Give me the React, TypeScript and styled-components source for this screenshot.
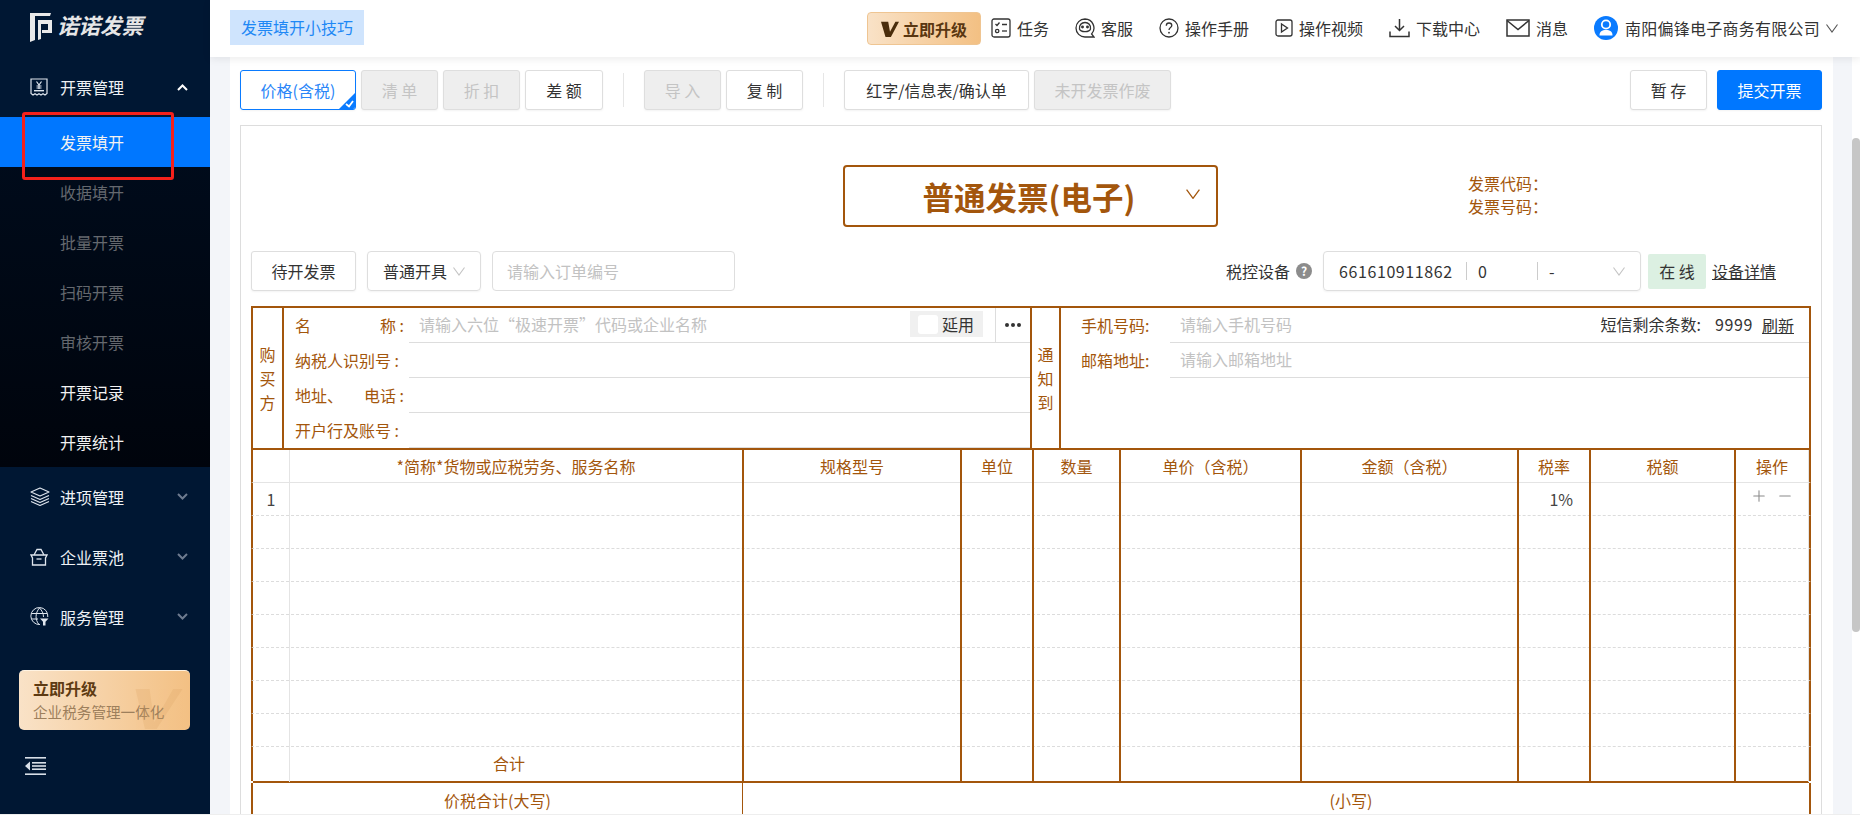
import { FC, ReactNode } from "react";
import styled, { createGlobalStyle } from "styled-components";
import { Plus, Minus } from "lucide-react";

const BROWN = "#a3560c";
const FIELD_LINE = "#dddddd";

const GlobalStyle = createGlobalStyle`
  html, body {
    margin: 0;
    height: 820px;
    overflow: hidden;
    background: #fff;
    font-family: "Noto Sans CJK SC", "Noto Sans", sans-serif;
    font-size: 16px;
    color: #333;
  }
  * { box-sizing: border-box; }
`;

const Shell = styled.div`
  display: flex;
  height: 815px;
  overflow: hidden;
  border-bottom: 1px solid #eeeeee;
`;

/* ---------- sidebar ---------- */

const Sidebar = styled.aside`
  position: relative;
  flex: none;
  width: 210px;
  background: #001733;
  display: flex;
  flex-direction: column;
`;

const LogoRow = styled.div`
  height: 60px;
  padding: 12px 0 0 30px;
  display: flex;
  align-items: flex-start;
  gap: 5px;
`;

const LogoText = styled.span`
  font-size: 21.5px;
  line-height: 24px;
  margin-top: 1px;
  font-weight: 700;
  font-style: italic;
  color: #e6e6e6;
`;

const NavGroup = styled.div<{ $h?: number; $pb?: number }>`
  height: ${(p) => p.$h ?? 60}px;
  padding: 0 22px ${(p) => p.$pb ?? 1}px 30px;
  display: flex;
  align-items: center;
  color: #eef1f5;
`;

const NavIcon = styled.span`
  width: 30px;
  display: flex;
  align-items: center;
`;

const NavLabel = styled.span`
  flex: 1;
`;

const SubMenu = styled.div`
  background: linear-gradient(180deg, #000c1d 0%, #00040c 100%);
`;

const SubItem = styled.div<{ $kind?: "active" | "muted" }>`
  height: 50px;
  padding-left: 60px;
  display: flex;
  align-items: center;
  background: ${(p) => (p.$kind === "active" ? "#0077ff" : "transparent")};
  color: ${(p) => (p.$kind === "muted" ? "#64686e" : "#f2f2f2")};
`;

const RedMark = styled.div`
  position: absolute;
  left: 22px;
  top: 112px;
  width: 152px;
  height: 68px;
  border: 3px solid #f5211b;
  border-radius: 3px;
`;

const UpgradeCard = styled.div`
  position: relative;
  margin: 23px 0 0 19px;
  width: 171px;
  height: 60px;
  padding: 6px 14px;
  border-radius: 5px;
  border-top: 1px solid #fff3e2;
  background: linear-gradient(90deg, #f9e2c7 0%, #f3c083 100%);
  overflow: hidden;
`;

const CardTitle = styled.div`
  font-size: 16px;
  line-height: 22px;
  font-weight: 700;
  color: #5e3b13;
`;

const CardSub = styled.div`
  font-size: 14.6px;
  line-height: 25px;
  white-space: nowrap;
  color: #9d7f5c;
`;

const CardMark = styled.svg`
  position: absolute;
  left: 116px;
  top: 18px;
`;

const CollapseButton = styled.div`
  margin: 26px 0 0 25px;
  height: 18px;
`;

/* ---------- header ---------- */

const Main = styled.div`
  flex: 1;
  min-width: 0;
  display: flex;
  flex-direction: column;
`;

const TopBar = styled.header`
  position: relative;
  z-index: 1;
  flex: none;
  height: 57px;
  padding: 0 22px 0 20px;
  background: #fff;
  box-shadow: 0 2px 8px rgba(0, 0, 0, 0.08);
  display: flex;
  align-items: center;
`;

const TipTag = styled.div`
  height: 35px;
  padding: 0 11px;
  margin-top: -2px;
  background: #cfe4fd;
  color: #1e88f5;
  line-height: 35px;
  white-space: nowrap;
`;

const TopActions = styled.div`
  margin-left: auto;
  display: flex;
  align-items: center;
  gap: 26px;
`;

const UpgradeButton = styled.div`
  width: 114px;
  height: 33px;
  margin-right: -16px;
  border: 1px solid #efc592;
  border-radius: 4px;
  background: linear-gradient(90deg, #f9e2c7 0%, #f3c083 100%);
  color: #5a3711;
  font-weight: 700;
  display: flex;
  align-items: center;
  justify-content: center;
  gap: 4px;
`;

const TopLink = styled.div`
  display: flex;
  align-items: center;
  gap: 6px;
  padding-bottom: 1px;
  color: #333;
  white-space: nowrap;
`;

const CompanyName = styled.span`
  margin-left: 1px;
  letter-spacing: 0.25px;
`;

/* ---------- content ---------- */

const ContentRow = styled.div`
  flex: 1;
  min-height: 0;
  display: flex;
  padding-left: 20px;
  background: #f3f5f9;
`;

const Sheet = styled.main`
  flex: none;
  width: 1603px;
  padding: 13px 11px 0 10px;
  background: #fff;
  overflow: hidden;
`;

const ScrollRail = styled.div`
  flex: 1;
  display: flex;
  justify-content: flex-end;
`;

const ScrollTrack = styled.div`
  width: 8px;
  padding-top: 81px;
  background: #fff;
`;

const ScrollThumb = styled.div`
  height: 494px;
  border-radius: 4px;
  background: #c6c6c6;
`;

const Toolbar = styled.div`
  display: flex;
  align-items: center;
  gap: 5px;
  height: 40px;
`;

const ToolButton = styled.div<{ $w: number; $off?: boolean; $primary?: boolean }>`
  width: ${(p) => p.$w}px;
  height: 40px;
  flex: none;
  border: 1px solid ${(p) => (p.$primary ? "#0077ff" : "#dedede")};
  border-radius: 3px;
  background: ${(p) => (p.$primary ? "#0077ff" : p.$off ? "#eeeeee" : "#fff")};
  color: ${(p) => (p.$primary ? "#fff" : p.$off ? "#c4c4c4" : "#333")};
  display: flex;
  align-items: center;
  justify-content: center;
  white-space: pre;
  box-shadow: 0 1px 2px rgba(0, 0, 0, 0.05);
`;

const PriceButton = styled(ToolButton)`
  position: relative;
  border-color: #0a7bff;
  color: #2a86f8;
  overflow: hidden;
`;

const CornerCheck = styled.svg`
  position: absolute;
  right: 0;
  bottom: 0;
`;

const ToolDivider = styled.div`
  width: 1px;
  height: 34px;
  margin: 0 15px;
  background: #e6e6e6;
`;

const ToolRight = styled.div`
  margin-left: auto;
  display: flex;
  gap: 10px;
`;

const Panel = styled.section`
  margin-top: 15px;
  height: 760px;
  padding: 0 10px;
  border: 1px solid #dddddd;
`;

const TitleRow = styled.div`
  height: 125px;
  display: flex;
  align-items: flex-start;
`;

const TypeBox = styled.div`
  width: 375px;
  height: 62px;
  margin: 39px 0 0 592px;
  border: 2px solid ${BROWN};
  border-radius: 4px;
  display: flex;
  align-items: center;
  color: ${BROWN};
`;

const TypeName = styled.div`
  flex: 1;
  padding-left: 27px;
  text-align: center;
  font-size: 31.5px;
  line-height: 40px;
  font-weight: 700;
  white-space: nowrap;
`;

const TypeChevron = styled.span`
  display: flex;
  margin: 0 16px 4px 0;
`;

const CodeInfo = styled.div`
  margin: 46px 0 0 250px;
  color: ${BROWN};
  line-height: 23px;
`;

const FilterRow = styled.div`
  height: 40px;
  margin-bottom: 15px;
  display: flex;
  align-items: center;
`;

const SelectBox = styled.div<{ $w: number }>`
  width: ${(p) => p.$w}px;
  height: 40px;
  flex: none;
  margin-left: 11px;
  padding: 0 15px;
  border: 1px solid #dedede;
  border-radius: 4px;
  display: flex;
  align-items: center;
  color: #333;
  box-shadow: 0 1px 2px rgba(0, 0, 0, 0.05);
`;

const SelectArrow = styled.span`
  display: flex;
  margin-left: 6px;
`;

const OrderInput = styled.input`
  width: 243px;
  height: 40px;
  margin-left: 11px;
  padding: 0 14px;
  border: 1px solid #dedede;
  border-radius: 4px;
  font: inherit;
  outline: none;
  &::placeholder { color: #c2c2c2; }
`;

const DeviceArea = styled.div`
  margin-left: auto;
  margin-right: 35px;
  display: flex;
  align-items: center;
`;

const HelpDot = styled.span`
  width: 16px;
  height: 16px;
  margin-left: 6px;
  border-radius: 50%;
  background: #8c8c8c;
  color: #fff;
  font-size: 12px;
  font-weight: 700;
  line-height: 16px;
  text-align: center;
`;

const SelectPart = styled.span<{ $w?: number; $last?: boolean }>`
  width: ${(p) => (p.$w ? `${p.$w}px` : "auto")};
  flex: ${(p) => (p.$w ? "none" : 1)};
  height: 18px;
  line-height: 18px;
  border-right: 1px solid ${(p) => (p.$last ? "transparent" : "#cccccc")};
  letter-spacing: 0.6px;
`;

const PartGap = styled.span`
  width: 11px;
  flex: none;
`;

const OnlineBadge = styled.div`
  width: 58px;
  height: 35px;
  margin-left: 7px;
  background: #dcf0e2;
  border-radius: 2px;
  line-height: 34px;
  text-align: center;
  white-space: pre;
`;

const TextLink = styled.span<{ $ml: number }>`
  margin-left: ${(p) => p.$ml}px;
  color: #333;
  text-decoration: underline;
  white-space: nowrap;
`;

/* ---------- invoice table ---------- */

const PartyBlock = styled.div`
  display: grid;
  grid-template-columns: 31px 748px 29px 1fr;
  height: 144px;
  border: 2px solid ${BROWN};
`;

const SideCell = styled.div`
  display: flex;
  flex-direction: column;
  align-items: center;
  justify-content: center;
  border-right: 2px solid ${BROWN};
  color: ${BROWN};
  line-height: 24px;
`;

const PartyColumn = styled.div`
  border-right: 2px solid ${BROWN};
`;

const PartyRow = styled.div`
  height: 35px;
  display: flex;
`;

const FieldLabel = styled.label<{ $w: number; $pl: number }>`
  flex: none;
  width: ${(p) => p.$w}px;
  padding: 0 0 2px ${(p) => p.$pl}px;
  display: flex;
  align-items: center;
  justify-content: space-between;
  color: ${BROWN};
  white-space: pre;
`;

const FieldLine = styled.div<{ $ml: number; $pr?: number }>`
  flex: 1;
  min-width: 0;
  margin-left: ${(p) => p.$ml}px;
  padding-right: ${(p) => p.$pr ?? 0}px;
  display: flex;
  align-items: center;
  border-bottom: 1px solid ${FIELD_LINE};
`;

const FieldInput = styled.input`
  flex: 1;
  min-width: 0;
  height: 100%;
  padding: 0 10px 2px;
  border: none;
  outline: none;
  background: transparent;
  font: inherit;
  &::placeholder { color: #c2c2c2; }
`;

const ReuseBox = styled.div`
  width: 73px;
  height: 26px;
  margin-bottom: 2px;
  padding-left: 8px;
  background: #f0f0f0;
  display: flex;
  align-items: center;
  gap: 4px;
  color: #333;
`;

const ReuseCheck = styled.span`
  width: 20px;
  height: 19px;
  border-radius: 3px;
  background: #fff;
`;

const MoreCell = styled.div`
  width: 35px;
  height: 100%;
  margin-left: 12px;
  border-left: 1px solid ${FIELD_LINE};
  display: flex;
  align-items: center;
  justify-content: center;
  gap: 2px;
`;

const MoreDot = styled.span`
  width: 4px;
  height: 4px;
  border-radius: 50%;
  background: #333;
`;

const SmsInfo = styled.span`
  padding-bottom: 2px;
  color: #333;
  white-space: nowrap;
`;

const SmsCount = styled.span`
  margin-left: 14px;
  letter-spacing: 0.6px;
`;

const ItemRow = styled.div<{ $h: number; $line: "solid" | "dashed" | "none" }>`
  display: grid;
  grid-template-columns: 36px 453px 218px 72px 87px 181px 217px 72px 145px 1fr;
  height: ${(p) => p.$h}px;
  border-left: 2px solid ${BROWN};
  border-right: 2px solid ${BROWN};
  border-bottom: ${(p) =>
    p.$line === "none" ? "none" : `1px ${p.$line} ${p.$line === "solid" ? "#e4e4e4" : "#dcdcdc"}`};
`;

const ItemCell = styled.div<{ $edge?: "none" | "light" | "brown"; $align?: "center" | "right"; $end?: boolean }>`
  display: flex;
  align-items: center;
  justify-content: ${(p) => (p.$align === "right" ? "flex-end" : "center")};
  padding: 0 ${(p) => (p.$align === "right" ? "16px" : "0")} 1px 0;
  border-left: ${(p) =>
    p.$edge === "none"
      ? "none"
      : p.$edge === "light"
        ? "1px solid #e4e4e4"
        : `2px solid ${BROWN}`};
  border-right: ${(p) => (p.$end ? "1px solid #e4e4e4" : "none")};
  margin-bottom: -1px;
  color: ${BROWN};
  white-space: nowrap;
`;

const PlainNumber = styled.span`
  color: #444;
`;

const TotalLabel = styled.span`
  margin: 0 14px 3px 0;
`;

const OpIcons = styled.span`
  display: flex;
  gap: 8px;
  margin-bottom: 6px;
  color: #8a8a8a;
`;

const ThickRule = styled.div`
  height: 2px;
  margin: 0 2px;
  background: ${BROWN};
`;

const SumRow = styled.div`
  display: grid;
  grid-template-columns: 489px 1fr;
  height: 34px;
  border-left: 2px solid ${BROWN};
  border-right: 2px solid ${BROWN};
  color: ${BROWN};
`;

const SumCell = styled.div<{ $pl?: number; $rule?: boolean }>`
  display: flex;
  align-items: center;
  justify-content: center;
  padding-left: ${(p) => p.$pl ?? 0}px;
  border-left: ${(p) => (p.$rule ? `1px solid ${BROWN}` : "none")};
`;

/* ---------- drawings ---------- */

const ThinChevron: FC<{ color: string; size?: number }> = ({ color, size = 12 }) => (
  <svg width={size} height={size * 0.75} viewBox="0 0 12 9" fill="none" stroke={color} strokeWidth="1.1">
    <polyline points="0.5,0.5 6,8 11.5,0.5" />
  </svg>
);

const NavChevron: FC<{ up?: boolean }> = ({ up }) => (
  <svg width="11" height="7" viewBox="0 0 11 7" fill="none" stroke={up ? "#ffffff" : "#6d7b8f"} strokeWidth="2">
    <polyline points={up ? "1,6 5.5,1.5 10,6" : "1,1 5.5,5.5 10,1"} />
  </svg>
);

const LogoMark: FC = () => (
  <svg width="22" height="30" viewBox="0 0 22 30" fill="#e9e9e9">
    <path d="M0 1H21L20 4H5V28L0 30Z" />
    <path d="M8 8H22V21H12V18H18V12H11V27L8 28Z" />
  </svg>
);

const InvoiceIcon: FC = () => (
  <svg width="18" height="18" viewBox="0 0 18 18" fill="none" stroke="#dfe6ee" strokeWidth="1.2">
    <path d="M1 1H17V15.5L15 17L13 15.7L11 17L9 15.7L7 17L5 15.7L3 17L1 15.5Z" />
    <path d="M6.5 3.5L9 7L11.5 3.5M9 7V11M6.5 8H11.5M6.5 10H11.5" />
    <rect x="4" y="12" width="10" height="1.4" fill="#dfe6ee" stroke="none" />
  </svg>
);

const LayersIcon: FC = () => (
  <svg width="20" height="20" viewBox="0 0 20 20" fill="none" stroke="#dfe6ee" strokeWidth="1.1" strokeLinejoin="round">
    <path d="M10 1L19 5L10 9L1 5Z" />
    <path d="M1 8.5L10 12.5L19 8.5" />
    <path d="M1 11.5L10 15.5L19 11.5" />
    <path d="M1 14.5L10 18.5L19 14.5" />
  </svg>
);

const PoolIcon: FC = () => (
  <svg width="18" height="18" viewBox="0 0 18 18" fill="none" stroke="#dfe6ee" strokeWidth="1.3">
    <path d="M4 7L7 1.5H11L14 7" />
    <path d="M1 7H17L15.5 10V17H2.5V10Z" />
    <path d="M6.5 11H11.5" />
  </svg>
);

const GlobeIcon: FC = () => (
  <svg width="19" height="19" viewBox="0 0 19 19" fill="none" stroke="#dfe6ee" strokeWidth="1">
    <path d="M10 17.5A8.5 8.5 0 1 1 17.8 10" />
    <path d="M9.5 1C5 6 5 13 9 17.5M9.5 1C12 3.5 13.5 6.5 13.5 10M1.5 6.5H17M1.5 12H8" />
    <path d="M10 11.5H18.5L15.5 14.8V18.5H13V14.8Z" fill="#dfe6ee" stroke="none" />
  </svg>
);

const CollapseIcon: FC = () => (
  <svg width="21" height="18" viewBox="0 0 21 18" fill="#d8dfe8">
    <rect x="0" y="0" width="21" height="1.6" />
    <rect x="7" y="5" width="14" height="1.6" />
    <rect x="7" y="8.2" width="14" height="1.6" />
    <rect x="7" y="11.4" width="14" height="1.6" />
    <rect x="0" y="16.4" width="21" height="1.6" />
    <path d="M5 4.5V13.5L0 9Z" />
  </svg>
);

const BoldV: FC<{ color: string; size: number }> = ({ color, size }) => (
  <svg width={size} height={size} viewBox="0 0 20 20" fill={color}>
    <path d="M0 2H8L10 13L16 2H20L11 19H5Z" />
  </svg>
);

const TaskIcon: FC = () => (
  <svg width="20" height="20" viewBox="0 0 20 20" fill="none" stroke="#333" strokeWidth="1.3">
    <rect x="1" y="1" width="18" height="18" rx="2" />
    <path d="M4.5 6L6 7.5L8.5 4.5M11 6.5H16" />
    <circle cx="6.2" cy="13" r="1.7" />
    <path d="M11 13H16" />
  </svg>
);

const ServiceIcon: FC = () => (
  <svg width="20" height="20" viewBox="0 0 20 20" fill="none" stroke="#333" strokeWidth="1.3">
    <path d="M10 1A9 9 0 1 0 10 19H19L16.6 16A9 9 0 0 0 10 1Z" />
    <path d="M4.5 11C4 7 6.5 4.5 10 4.5C13.5 4.5 16 7 15.5 11C14.5 14.5 5.5 14.5 4.5 11Z" />
    <circle cx="7.5" cy="9" r="0.8" fill="#333" />
    <circle cx="12.5" cy="9" r="0.8" fill="#333" />
  </svg>
);

const HelpIcon: FC = () => (
  <svg width="20" height="20" viewBox="0 0 20 20" fill="none" stroke="#333" strokeWidth="1.3">
    <circle cx="10" cy="10" r="9" />
    <path d="M7.3 7.7C7.3 5.9 8.6 5 10 5C11.5 5 12.8 6 12.8 7.5C12.8 9.5 10 9.6 10 12" />
    <circle cx="10" cy="14.7" r="0.9" fill="#333" stroke="none" />
  </svg>
);

const VideoIcon: FC = () => (
  <svg width="18" height="18" viewBox="0 0 18 18" fill="none" stroke="#333" strokeWidth="1.3">
    <rect x="1" y="1" width="16" height="16" rx="2" />
    <path d="M6.5 5V13L12.5 9Z" />
  </svg>
);

const DownloadIcon: FC = () => (
  <svg width="21" height="20" viewBox="0 0 21 20" fill="none" stroke="#333" strokeWidth="1.5">
    <path d="M10.5 1V12M6 8L10.5 12.5L15 8" />
    <path d="M1 13.5V18.5H20V13.5" />
  </svg>
);

const MailIcon: FC = () => (
  <svg width="24" height="18" viewBox="0 0 24 18" fill="none" stroke="#333" strokeWidth="1.5">
    <rect x="1" y="1" width="22" height="16" />
    <path d="M1 1.5L12 10.5L23 1.5" />
  </svg>
);

const AvatarIcon: FC = () => (
  <svg width="24" height="24" viewBox="0 0 24 24">
    <circle cx="12" cy="12" r="12" fill="#0a7bff" />
    <circle cx="12" cy="8.5" r="4.2" fill="none" stroke="#fff" strokeWidth="1.8" />
    <path d="M5.5 19.5C5.5 15.5 8 14 12 14C16 14 18.5 15.5 18.5 19.5Z" fill="#fff" />
  </svg>
);

/* ---------- data ---------- */

const subItems: { label: string; kind?: "active" | "muted" }[] = [
  { label: "发票填开", kind: "active" },
  { label: "收据填开", kind: "muted" },
  { label: "批量开票", kind: "muted" },
  { label: "扫码开票", kind: "muted" },
  { label: "审核开票", kind: "muted" },
  { label: "开票记录" },
  { label: "开票统计" },
];

const navGroups: { label: string; icon: ReactNode }[] = [
  { label: "进项管理", icon: <LayersIcon /> },
  { label: "企业票池", icon: <PoolIcon /> },
  { label: "服务管理", icon: <GlobeIcon /> },
];

const topLinks: { label: string; icon: ReactNode }[] = [
  { label: "任务", icon: <TaskIcon /> },
  { label: "客服", icon: <ServiceIcon /> },
  { label: "操作手册", icon: <HelpIcon /> },
  { label: "操作视频", icon: <VideoIcon /> },
  { label: "下载中心", icon: <DownloadIcon /> },
  { label: "消息", icon: <MailIcon /> },
];

const columnTitles = ["", "*简称*货物或应税劳务、服务名称", "规格型号", "单位", "数量", "单价（含税）", "金额（含税）", "税率", "税额", "操作"];

const edgeOf = (i: number) => (i === 0 ? "none" : i === 1 ? "light" : "brown");

const emptyRows = [2, 3, 4, 5, 6, 7, 8];

const BlankCells: FC = () => (
  <>
    {columnTitles.map((t, i) => (
      <ItemCell key={t + i} $edge={edgeOf(i)} $end={i === 9} />
    ))}
  </>
);

const App: FC = () => (
  <>
    <GlobalStyle />
    <Shell>
      <Sidebar>
        <LogoRow>
          <LogoMark />
          <LogoText>诺诺发票</LogoText>
        </LogoRow>
        <NavGroup $h={57} $pb={3}>
          <NavIcon><InvoiceIcon /></NavIcon>
          <NavLabel>开票管理</NavLabel>
          <NavChevron up />
        </NavGroup>
        <SubMenu>
          {subItems.map((s) => (
            <SubItem key={s.label} $kind={s.kind}>{s.label}</SubItem>
          ))}
        </SubMenu>
        {navGroups.map((g) => (
          <NavGroup key={g.label}>
            <NavIcon>{g.icon}</NavIcon>
            <NavLabel>{g.label}</NavLabel>
            <NavChevron />
          </NavGroup>
        ))}
        <UpgradeCard>
          <CardTitle>立即升级</CardTitle>
          <CardSub>企业税务管理一体化</CardSub>
          <CardMark width="48" height="40" viewBox="0 0 20 17" fill="#d9a15f" opacity="0.22">
            <path d="M0 0H6L8 14L16 0H20L9 17H4Z" />
          </CardMark>
        </UpgradeCard>
        <CollapseButton><CollapseIcon /></CollapseButton>
        <RedMark />
      </Sidebar>

      <Main>
        <TopBar>
          <TipTag>发票填开小技巧</TipTag>
          <TopActions>
            <UpgradeButton>
              <BoldV color="#4a2d0c" size={18} />
              立即升级
            </UpgradeButton>
            {topLinks.map((l) => (
              <TopLink key={l.label}>
                {l.icon}
                {l.label}
              </TopLink>
            ))}
            <TopLink>
              <AvatarIcon />
              <CompanyName>南阳偏锋电子商务有限公司</CompanyName>
              <ThinChevron color="#555" />
            </TopLink>
          </TopActions>
        </TopBar>

        <ContentRow>
          <Sheet>
            <Toolbar>
              <PriceButton $w={116}>
                价格(含税)
                <CornerCheck width="16" height="16" viewBox="0 0 16 16">
                  <path d="M16 0V16H0Z" fill="#0a7bff" />
                  <path d="M7 11L10 13.5L14 8" fill="none" stroke="#fff" strokeWidth="1.8" />
                </CornerCheck>
              </PriceButton>
              <ToolButton $w={77} $off>清 单</ToolButton>
              <ToolButton $w={77} $off>折 扣</ToolButton>
              <ToolButton $w={78}>差 额</ToolButton>
              <ToolDivider />
              <ToolButton $w={77} $off>导 入</ToolButton>
              <ToolButton $w={77}>复 制</ToolButton>
              <ToolDivider />
              <ToolButton $w={185}>红字/信息表/确认单</ToolButton>
              <ToolButton $w={137} $off>未开发票作废</ToolButton>
              <ToolRight>
                <ToolButton $w={77}>暂 存</ToolButton>
                <ToolButton $w={105} $primary>提交开票</ToolButton>
              </ToolRight>
            </Toolbar>

            <Panel>
              <TitleRow>
                <TypeBox>
                  <TypeName>普通发票(电子)</TypeName>
                  <TypeChevron><ThinChevron color={BROWN} size={14} /></TypeChevron>
                </TypeBox>
                <CodeInfo>
                  <div>发票代码：</div>
                  <div>发票号码：</div>
                </CodeInfo>
              </TitleRow>

              <FilterRow>
                <ToolButton $w={105}>待开发票</ToolButton>
                <SelectBox $w={114}>
                  普通开具
                  <SelectArrow><ThinChevron color="#c4c4c4" /></SelectArrow>
                </SelectBox>
                <OrderInput placeholder="请输入订单编号" />
                <DeviceArea>
                  税控设备
                  <HelpDot>?</HelpDot>
                  <SelectBox $w={318}>
                    <SelectPart $w={128}>661610911862</SelectPart>
                    <PartGap />
                    <SelectPart $w={60}>0</SelectPart>
                    <PartGap />
                    <SelectPart $last>-</SelectPart>
                    <SelectArrow><ThinChevron color="#c4c4c4" /></SelectArrow>
                  </SelectBox>
                  <OnlineBadge>在 线</OnlineBadge>
                  <TextLink $ml={6}>设备详情</TextLink>
                </DeviceArea>
              </FilterRow>

              <PartyBlock>
                <SideCell>
                  <span>购</span>
                  <span>买</span>
                  <span>方</span>
                </SideCell>
                <PartyColumn>
                  <PartyRow>
                    <FieldLabel $w={120} $pl={11}>
                      <span>名</span>
                      <span>称 :</span>
                    </FieldLabel>
                    <FieldLine $ml={5}>
                      <FieldInput placeholder="请输入六位“极速开票”代码或企业名称" />
                      <ReuseBox>
                        <ReuseCheck />
                        延用
                      </ReuseBox>
                      <MoreCell>
                        <MoreDot />
                        <MoreDot />
                        <MoreDot />
                      </MoreCell>
                    </FieldLine>
                  </PartyRow>
                  <PartyRow>
                    <FieldLabel $w={120} $pl={11}>纳税人识别号 :</FieldLabel>
                    <FieldLine $ml={5} />
                  </PartyRow>
                  <PartyRow>
                    <FieldLabel $w={120} $pl={11}>
                      <span>地址、</span>
                      <span>电话 :</span>
                    </FieldLabel>
                    <FieldLine $ml={5} />
                  </PartyRow>
                  <PartyRow>
                    <FieldLabel $w={120} $pl={11}>开户行及账号 :</FieldLabel>
                    <FieldLine $ml={5} />
                  </PartyRow>
                </PartyColumn>
                <SideCell>
                  <span>通</span>
                  <span>知</span>
                  <span>到</span>
                </SideCell>
                <div>
                  <PartyRow>
                    <FieldLabel $w={109} $pl={20}>手机号码:</FieldLabel>
                    <FieldLine $ml={0} $pr={15}>
                      <FieldInput placeholder="请输入手机号码" />
                      <SmsInfo>
                        短信剩余条数:
                        <SmsCount>9999</SmsCount>
                      </SmsInfo>
                      <TextLink $ml={9}>刷新</TextLink>
                    </FieldLine>
                  </PartyRow>
                  <PartyRow>
                    <FieldLabel $w={109} $pl={20}>邮箱地址:</FieldLabel>
                    <FieldLine $ml={0}>
                      <FieldInput placeholder="请输入邮箱地址" />
                    </FieldLine>
                  </PartyRow>
                </div>
              </PartyBlock>

              <ItemRow $h={33} $line="solid">
                {columnTitles.map((t, i) => (
                  <ItemCell key={t + i} $edge={edgeOf(i)} $end={i === 9}>{t}</ItemCell>
                ))}
              </ItemRow>

              <ItemRow $h={33} $line="dashed">
                <ItemCell $edge="none"><PlainNumber>1</PlainNumber></ItemCell>
                <ItemCell $edge="light" />
                <ItemCell />
                <ItemCell />
                <ItemCell />
                <ItemCell />
                <ItemCell />
                <ItemCell $align="right"><PlainNumber>1%</PlainNumber></ItemCell>
                <ItemCell />
                <ItemCell $end>
                  <OpIcons>
                    <Plus size={18} strokeWidth={1.4} />
                    <Minus size={18} strokeWidth={1.4} />
                  </OpIcons>
                </ItemCell>
              </ItemRow>

              {emptyRows.map((n) => (
                <ItemRow key={n} $h={33} $line="dashed">
                  <BlankCells />
                </ItemRow>
              ))}

              <ItemRow $h={34} $line="none">
                <ItemCell $edge="none" />
                <ItemCell $edge="light"><TotalLabel>合计</TotalLabel></ItemCell>
                <ItemCell />
                <ItemCell />
                <ItemCell />
                <ItemCell />
                <ItemCell />
                <ItemCell />
                <ItemCell />
                <ItemCell $end />
              </ItemRow>
              <ThickRule />

              <SumRow>
                <SumCell>价税合计(大写)</SumCell>
                <SumCell $rule $pl={150}>(小写)</SumCell>
              </SumRow>
            </Panel>
          </Sheet>
          <ScrollRail>
            <ScrollTrack>
              <ScrollThumb />
            </ScrollTrack>
          </ScrollRail>
        </ContentRow>
      </Main>
    </Shell>
  </>
);

export default App;
